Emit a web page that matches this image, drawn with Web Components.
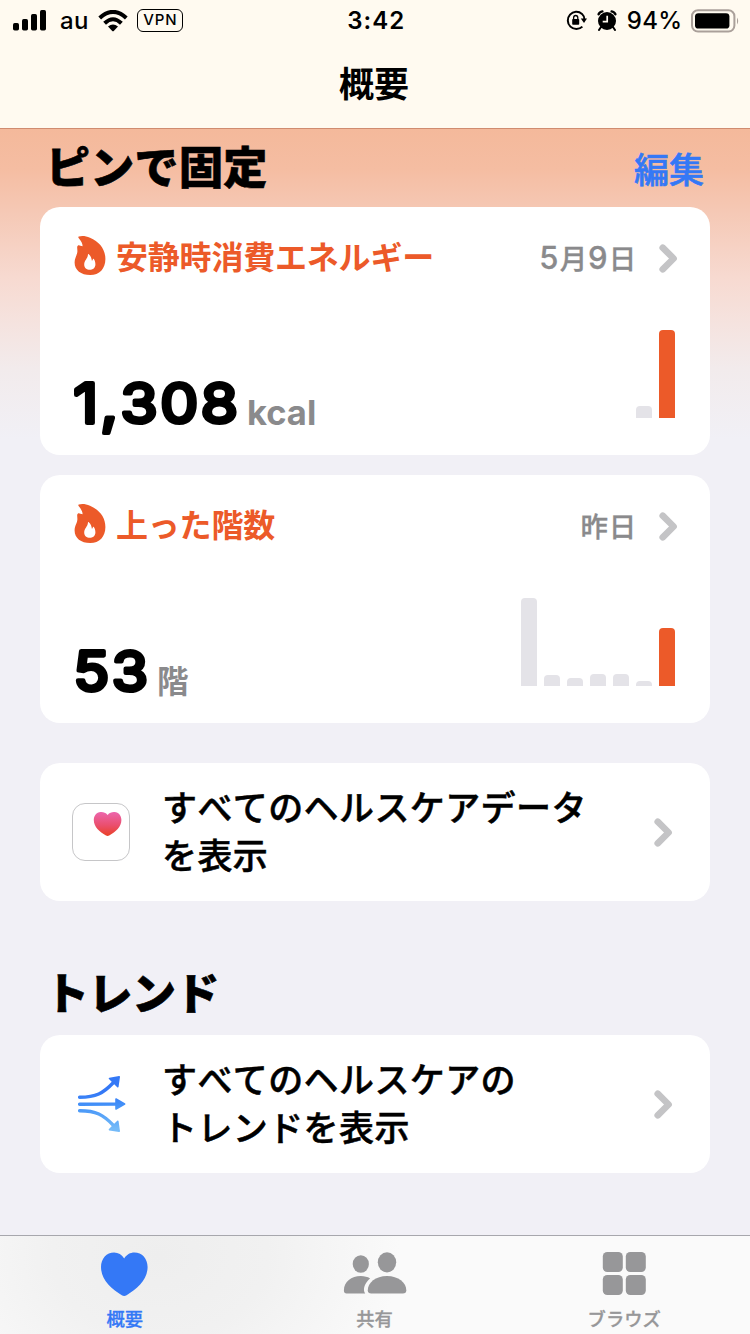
<!DOCTYPE html>
<html lang="ja">
<head>
<meta charset="utf-8">
<title>概要</title>
<style>
html,body{margin:0;padding:0}
body{font-family:Inter,"Noto Sans CJK JP",sans-serif;color:#000;background:#f1f0f6}
</style>
</head>
<body>
<health-app></health-app>
<script>
function define(name, html, render) {
  const t = document.createElement('template');
  if (html) t.innerHTML = html;
  customElements.define(name, class extends HTMLElement {
    constructor() {
      super();
      this.attachShadow({mode: 'open'}).appendChild(t.content.cloneNode(true));
    }
    connectedCallback() { if (render) render(this, this.shadowRoot); }
  });
}

define('chevron-icon', `
<style>:host{display:block;flex:none;width:19px;height:29px}svg{display:block}</style>
<svg width="19" height="29" viewBox="0 0 19 29"><path d="M3.7 3.7 L14.6 14.5 L3.7 25.3" fill="none" stroke="#c4c4c6" stroke-width="6.6" stroke-linecap="round" stroke-linejoin="round"/></svg>`);

define('flame-icon', `
<style>:host{display:block;flex:none;width:32px;height:40px}svg{display:block}</style>
<svg width="32" height="40" viewBox="0 0 32 40"><path fill="#ec5a29" fill-rule="evenodd" d="M4.8 .6 C8 -.4 12 .1 16 1.8 C25.5 5.7 31.4 13.4 31.4 22.9 C31.4 32.6 25.5 39 16.2 39 C7 39 .6 34 .6 26.4 C.6 21.8 3.3 18.9 3.4 15.2 C3.4 13.6 3.1 12.4 3.2 11 C3.3 9.8 4.3 9.2 5.4 9.4 L8.6 10.2 C8.6 7.6 7.2 5.2 4.6 2 C4.1 1.4 4.2 .8 4.8 .6Z M15 18.4 C14.4 17.8 13.9 18.1 13.9 18.9 C13.9 21.9 10.2 24.4 10.2 28.4 C10.2 31.8 12.6 33.8 15.9 33.8 C19.3 33.8 21.4 31.6 21.4 28.3 C21.4 26 20.7 24.2 19.8 23 C19.3 22.5 18.8 22.8 18.8 23.6 C18.7 24.3 18.4 24.8 17.9 24.8 C17.6 22.2 16.8 20.1 15 18.4Z"/></svg>`);

define('status-bar', `
<style>
:host{display:grid;grid-template-columns:1fr auto 1fr;align-items:center;height:41px;padding:0 10.5px 0 13px;font-size:24px;line-height:40px;font-weight:500}
div{display:flex;align-items:center}
svg{display:block;flex:none}
.sig{margin-top:-2px}
.au{margin:1px 9px 0 13px;letter-spacing:.4px}
.vpn{box-sizing:border-box;width:46px;height:23px;border:1.8px solid #000;border-radius:6px;margin-left:9px;font-size:15px;line-height:20px;text-align:center;letter-spacing:.9px;padding-left:1px}
.time{font-weight:600;font-size:24px;letter-spacing:1px}
.r{justify-content:flex-end}
.pc{margin:1px 8px 0 10px;font-size:24px;letter-spacing:.35px}
</style>
<div>
<svg class="sig" width="34" height="22" viewBox="0 0 34 22"><rect x="0" y="14" width="6" height="7.5" rx="1.7"/><rect x="9" y="10" width="6" height="11.5" rx="1.7"/><rect x="18" y="5" width="6" height="16.5" rx="1.7"/><rect x="27" y="1" width="6" height="20.5" rx="1.7"/></svg>
<span class="au">au</span>
<svg width="30" height="22" viewBox="0 0 30 22"><g fill="none" stroke="#000" stroke-width="4"><path d="M1.7 8 Q15 -4.2 28.3 8"/><path d="M6.6 13.3 Q15 5.2 23.4 13.3"/></g><path d="M10 16.6 Q15 12.4 20 16.6 L16 20.8 Q15 21.8 14 20.8Z"/></svg>
<span class="vpn">VPN</span>
</div>
<div class="time">3:42</div>
<div class="r">
<svg width="21" height="21" viewBox="0 0 21 21"><path d="M16 3.9 A8.6 8.6 0 1 0 16.4 16.6 M16 3.9 Q18.2 6 18.3 9" fill="none" stroke="#000" stroke-width="2"/><path d="M14.8 8.6 H21 L18 13Z"/><rect x="6.2" y="9" width="7" height="5.8" rx=".8"/><path d="M7.6 9.4 V7.8 a2.1 2.3 0 0 1 4.2 0 V9.4" fill="none" stroke="#000" stroke-width="1.3"/></svg>
<svg style="margin-left:10px" width="20" height="21" viewBox="0 0 20 21"><circle cx="10" cy="11" r="9"/><path d="M1.6 4.3 Q2.6 1.8 5.4 1.4 M18.4 4.3 Q17.4 1.8 14.6 1.4" fill="none" stroke="#000" stroke-width="2.4" stroke-linecap="round"/><path d="M4 17 L2 20 M16 17 L18 20" stroke="#000" stroke-width="2" stroke-linecap="round"/><path d="M10.2 5.7 V11.6 H5.7" fill="none" stroke="#fffaf0" stroke-width="1.7"/></svg>
<span class="pc">94%</span>
<svg width="49" height="24" viewBox="0 0 49 24"><rect x="1" y="1.2" width="42.4" height="21.4" rx="6" fill="none" stroke="#aaa09a" stroke-width="2"/><rect x="4" y="4.2" width="34.4" height="15.4" rx="3.4"/><path d="M46 8.5 Q48.4 12 46 15.5Z" fill="#aaa09a"/></svg>
</div>`);

define('nav-header', `
<style>
:host{display:block;height:128px;background:#fffaf0;border-bottom:1px solid #d08c70}
h1{margin:0;font-size:35px;font-weight:600;line-height:86px;height:87px;text-align:center;padding-right:2px}
</style>
<status-bar></status-bar><h1><slot></slot></h1>`);

define('section-heading', `
<style>
:host{display:flex;align-items:center;justify-content:space-between;padding:0 5px 0 6px;height:var(--h,78px)}
h2{margin:0;font-size:44px;line-height:50px;font-weight:900;letter-spacing:var(--ls,.3px);-webkit-text-stroke:.6px #000}
::slotted(a){font-size:35px;line-height:40px;font-weight:500;-webkit-text-stroke:.6px #3478f6;color:#3478f6;margin:4px 1px 0 0}
</style>
<h2><slot></slot></h2><slot name="action"></slot>`);

define('mini-bars', `
<style>
:host{display:flex;align-items:flex-end;gap:6.9px;height:88px}
i{display:block;width:16px;border-radius:4px 4px 0 0;background:#e4e3e8}
i:last-child{background:#ec5a29}
</style>`, (el, root) => {
  for (const h of el.getAttribute('values').split(',')) {
    const bar = document.createElement('i');
    bar.style.height = h + 'px';
    root.appendChild(bar);
  }
});

// Bold numerals with rounded stroke ends.
define('round-number', `
<style>:host{display:block;flex:none}svg{display:block;overflow:visible}
text{font-size:55.5px;font-weight:400;letter-spacing:2.4px;font-kerning:none;stroke:#000;stroke-width:4.2px;stroke-linejoin:round;stroke-linecap:round}</style>
<svg height="50"><text x="-.5" y="48" lengthAdjust="spacingAndGlyphs"></text></svg>`, (el, root) => {
  const w = +el.getAttribute('width');
  const t = root.querySelector('text');
  root.querySelector('svg').setAttribute('width', w);
  t.setAttribute('textLength', w + 2);
  t.textContent = el.getAttribute('value');
});

define('metric-card', `
<style>
:host{display:flex;flex-direction:column;justify-content:space-between;box-sizing:border-box;height:248px;border-radius:20px;background:#fff;padding:29px 32px 0 34px}
.head{display:flex;align-items:center;height:40px}
.title{font-size:32px;line-height:40px;font-weight:700;color:#ec5a29;margin:3px auto 0 10px;letter-spacing:-.2px}
.date{font-size:27.5px;line-height:40px;font-weight:500;color:#8a8a8c;margin:5px 22px 0 0;letter-spacing:.8px;-webkit-text-stroke:.3px #8a8a8c}
chevron-icon{margin-top:5px}
.body{display:flex;align-items:flex-end;justify-content:space-between;height:125px;padding-right:3.2px}
.num{display:flex;align-items:baseline;height:70px;margin-bottom:10px;line-height:70px}
.u{font-size:var(--unit,34.5px);font-weight:700;color:#8a8a8c;margin-left:8px}
::slotted(mini-bars){margin-bottom:37px}
</style>
<div class="head"><flame-icon></flame-icon><span class="title"><slot name="title"></slot></span><span class="date"><slot name="date"></slot></span><chevron-icon></chevron-icon></div>
<div class="body"><div class="num"><slot name="value"></slot><span class="u"><slot name="unit"></slot></span></div><slot name="chart"></slot></div>`);

define('link-card', `
<style>
:host{display:flex;align-items:center;box-sizing:border-box;height:138px;border-radius:20px;background:#fff;padding:0 37px 0 32px}
.icon{width:58px;height:58px;flex:none}
.text{margin:0 auto 0 32px;font-size:35px;line-height:48.5px;font-weight:500;letter-spacing:.4px;font-feature-settings:"palt" 0,"kern" 0;font-kerning:none;-webkit-text-stroke:.5px #000}
</style>
<div class="icon"><slot name="icon"></slot></div><div class="text"><slot></slot></div><chevron-icon></chevron-icon>`);

define('health-icon', `
<style>:host{display:block}svg{display:block}</style>
<svg width="58" height="58" viewBox="0 0 58 58"><defs><linearGradient id="g" x1="0" y1="0" x2="0" y2="1"><stop offset="0" stop-color="#ec66ad"/><stop offset=".55" stop-color="#ea4f6e"/><stop offset="1" stop-color="#ea4025"/></linearGradient></defs><rect x=".5" y=".5" width="57" height="57" rx="12.5" fill="#fff" stroke="#c6c6c8"/><path fill="url(#g)" d="M35.6 11.9 C33.6 9.6 31.2 8.8 28.6 9 C24.4 9.3 21.8 12.7 21.8 17 C21.8 24 27.5 28.8 34 32.6 Q35.6 33.5 37.2 32.6 C43.7 28.8 49.4 24 49.4 17 C49.4 12.7 46.8 9.3 42.6 9 C40 8.8 37.6 9.6 35.6 11.9Z"/></svg>`);

define('trend-icon', `
<style>:host{display:block}svg{display:block}</style>
<svg width="58" height="58" viewBox="0 0 58 58"><defs><linearGradient id="g" gradientUnits="userSpaceOnUse" x1="0" y1="0" x2="0" y2="58"><stop offset="0" stop-color="#3478f6"/><stop offset=".3" stop-color="#3478f6"/><stop offset=".55" stop-color="#4594f8"/><stop offset=".92" stop-color="#74baf8"/></linearGradient></defs><g fill="none" stroke="url(#g)" stroke-width="3.4" stroke-linecap="round"><path d="M7.6 22.2 C24 22.2 31 18.5 41.5 7.5"/><path d="M7.6 29.2 L44 29.1"/><path d="M7.6 35.8 C24 35.8 31 39.5 41.5 50.5"/></g><g fill="url(#g)" stroke="url(#g)" stroke-width="1.6" stroke-linejoin="round"><path d="M37.5 3.5 L47.2 1.8 L45.8 11.6Z"/><path d="M44 24 L52.6 29 L44 34Z"/><path d="M37.5 54.6 L47.2 56.2 L45.8 46.4Z"/></g></svg>`);

define('tab-item', `
<style>
:host{display:flex;flex-direction:column;align-items:center;flex:1 1 0;color:#979799;font-size:18.3px;line-height:24px;font-weight:500;-webkit-text-stroke:.3px currentColor}
:host([active]){color:#3478f6}
.i{height:44px;margin:16px 0 11px}
</style>
<div class="i"><slot name="icon"></slot></div><slot></slot>`);

define('tab-bar', `
<style>
:host{display:flex;height:98px;padding-right:1px;border-top:1px solid #a7a7ad;background:radial-gradient(ellipse 240px 180px at 160px 20px,#eeeeee 0,#f1f1f1 45%,#fafafa 100%)}
svg{display:block;fill:currentColor}
</style>
<tab-item active><svg slot="icon" width="48" height="44" viewBox="0.6 0 48 44"><path d="M23.8 6.6 C21.6 2.7 17.8 .6 13.7 .6 C6.2 .6 .6 6.7 .6 15 C.6 27.4 10.6 36.6 21.4 43.2 Q23.8 44.6 26.2 43.2 C37 36.6 47.2 27.4 47.2 15 C47.2 6.7 41.6 .6 34 .6 C29.9 .6 26 2.7 23.8 6.6Z"/></svg>概要</tab-item>
<tab-item><svg slot="icon" width="64" height="44" viewBox="0 0 64 44"><ellipse cx="17.8" cy="12" rx="8.1" ry="8.8"/><ellipse cx="44" cy="10.3" rx="9.2" ry="10.1"/><path d="M3.6 41.4 Q.9 41.4 .9 38.5 C.9 30 8.4 24.1 17.8 24.1 C21.4 24.1 24.7 25 27.1 26.4 C23 29.7 20.7 34.2 21 38.5 Q21.1 40.3 22.2 41.4Z"/><path d="M28.3 41.4 Q24.8 41.4 24.8 38.2 C24.8 31 32.6 24.1 44 24.1 C55.3 24.1 63.3 31 63.3 38.2 Q63.3 41.4 59.8 41.4Z"/></svg>共有</tab-item>
<tab-item><svg slot="icon" width="44" height="44" viewBox="0 0 44 44"><rect x=".8" y="0" width="20" height="20" rx="4.5"/><rect x="23.8" y="0" width="20" height="20" rx="4.5"/><rect x=".8" y="23" width="20" height="20" rx="4.5"/><rect x="23.8" y="23" width="20" height="20" rx="4.5"/></svg>ブラウズ</tab-item>`);

define('health-app', `
<style>
:host{display:flex;flex-direction:column;width:750px;height:1334px;overflow:hidden}
main{flex:1;padding:0 40px;background:linear-gradient(180deg,#f4b99b 0,#f5bda2 40px,#f5c9b6 85px,#f7dad1 150px,#f5e3df 195px,#f2ebec 240px,#f1f0f6 310px)}
metric-card+metric-card{margin-top:20px}
metric-card+link-card{margin-top:40px}
.floors{--unit:31.5px}
b{font-size:31px;font-weight:inherit;letter-spacing:1.2px}
.trend{--h:82px;--ls:-.5px;margin-top:52px;margin-left:-1px}
</style>
<nav-header>概要</nav-header>
<main>
<section-heading>ピンで固定<a slot="action">編集</a></section-heading>
<metric-card><span slot="title">安静時消費エネルギー</span><span slot="date"><b>5</b>月<b>9</b>日</span><round-number slot="value" value="1,308" width="165"></round-number><span slot="unit">kcal</span><mini-bars slot="chart" values="12,88"></mini-bars></metric-card>
<metric-card class="floors"><span slot="title">上った階数</span><span slot="date">昨日</span><round-number slot="value" value="53" width="75"></round-number><span slot="unit">階</span><mini-bars slot="chart" values="88,11,8,12,12,5,58"></mini-bars></metric-card>
<link-card><health-icon slot="icon"></health-icon>すべてのヘルスケアデータ<br>を表示</link-card>
<section-heading class="trend">トレンド</section-heading>
<link-card><trend-icon slot="icon"></trend-icon>すべてのヘルスケアの<br>トレンドを表示</link-card>
</main>
<tab-bar></tab-bar>`);
</script>
</body>
</html>
